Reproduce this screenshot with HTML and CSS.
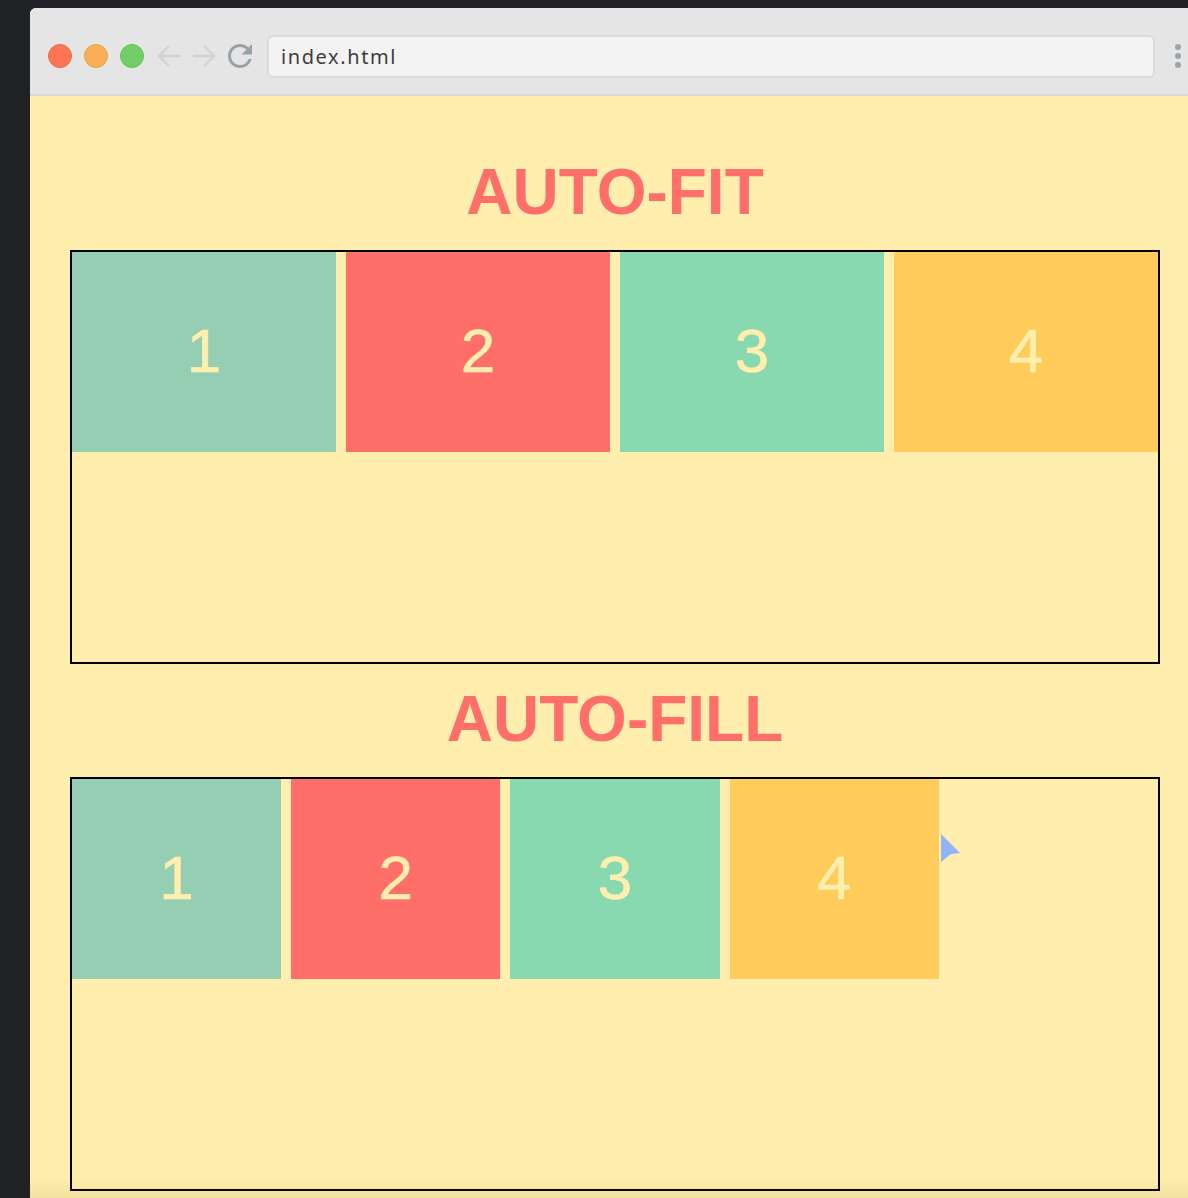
FILE: index.html
```html
<!DOCTYPE html>
<html lang="en">
<head>
<meta charset="utf-8">
<title>index.html</title>
<link rel="stylesheet" href="styles.css">
</head>
<body>
<div class="window">
  <div class="toolbar">
    <div class="lights">
      <span class="light light-red"></span>
      <span class="light light-orange"></span>
      <span class="light light-green"></span>
    </div>
    <svg class="nav nav-back" width="24" height="24" viewBox="0 0 24 24"><path d="M23 12H2M12 2L2 12l10 10" fill="none" stroke="#cfd2d5" stroke-width="2.4"/></svg>
    <svg class="nav nav-fwd" width="24" height="24" viewBox="0 0 24 24"><path d="M1 12h21M12 2l10 10-10 10" fill="none" stroke="#cfd2d5" stroke-width="2.4"/></svg>
    <svg class="reload" width="36" height="36" viewBox="0 0 24 24"><path fill="#97a1a7" d="M17.65 6.35A7.958 7.958 0 0 0 12 4c-4.420 0-7.99 3.58-7.99 8s3.57 8 7.99 8c3.73 0 6.84-2.55 7.73-6h-2.08A5.99 5.99 0 0 1 12 18c-3.31 0-6-2.69-6-6s2.69-6 6-6c1.66 0 3.14.69 4.22 1.78L13 11h7V4l-2.35 2.35z"/></svg>
    <div class="address">index.html</div>
    <div class="menu"><span></span><span></span><span></span></div>
  </div>
  <main class="page">
    <h1 class="title">AUTO-FIT</h1>
    <div class="grid grid-fit">
      <div class="item item-1">1</div>
      <div class="item item-2">2</div>
      <div class="item item-3">3</div>
      <div class="item item-4">4</div>
    </div>
    <h1 class="title">AUTO-FILL</h1>
    <div class="grid grid-fill">
      <div class="item item-1">1</div>
      <div class="item item-2">2</div>
      <div class="item item-3">3</div>
      <div class="item item-4">4</div>
      <svg class="cursor" width="20" height="28" viewBox="0 0 20 28"><polygon points="0,0 19,19 10,20 0,28" fill="#8fb4fb"/></svg>
    </div>
  </main>
</div>
</body>
</html>
```
FILE: styles.css
```css
html, body {
  margin: 0;
  padding: 0;
  overflow: hidden;
}
body {
  background: #202125;
  height: 1198px;
}
.window {
  margin: 8px 0 0 30px;
  width: 1170px;
  height: 1190px;
  background: #ffeead;
  border-top-left-radius: 6px;
  overflow: hidden;
}
.window::after {
  content: "";
  position: fixed;
  left: 30px;
  right: 0;
  bottom: 0;
  height: 20px;
  background: linear-gradient(to bottom, rgba(120, 100, 40, 0), rgba(120, 100, 40, 0.1));
}
.toolbar {
  display: flex;
  align-items: center;
  height: 76px;
  padding: 10px 0 0 18px;
  background: #e5e5e5;
  border-bottom: 2px solid #d8d8d8;
}
.lights {
  display: flex;
  gap: 12px;
}
.light {
  display: block;
  width: 24px;
  height: 24px;
  border-radius: 50%;
  box-sizing: border-box;
}
.light-red { background: #fd7553; border: 1px solid #ea6a4b; }
.light-orange { background: #f8ae56; border: 1px solid #e9a24f; }
.light-green { background: #72cf67; border: 1px solid #67c05d; }
.nav-back { margin-left: 13px; }
.nav-fwd { margin-left: 11px; }
.reload { margin-left: 6px; }
.address {
  margin-left: 9px;
  height: 39px;
  background: #f3f3f3;
  border: 2px solid #dadada;
  border-radius: 6px;
  font-family: "Noto Sans", "Liberation Sans", sans-serif;
  font-size: 20px;
  letter-spacing: 1.6px;
  color: #3d3d3d;
  line-height: 39px;
  padding-left: 12px;
  box-sizing: content-box;
  width: 872px;
}
.menu {
  display: flex;
  flex-direction: column;
  gap: 3px;
  margin-left: 20px;
}
.menu span {
  display: block;
  width: 6px;
  height: 6px;
  border-radius: 50%;
  background: #9aa4ab;
}
.page {
  padding: 41px 40px 0;
}
.title {
  margin: 23px 0 26px;
  font-family: "Liberation Sans", Arial, Helvetica, sans-serif;
  font-weight: 700;
  font-size: 64px;
  line-height: 64px;
  text-align: center;
  color: #ff6f69;
}
.grid {
  position: relative;
  display: grid;
  grid-gap: 10px;
  grid-auto-rows: 200px;
  align-content: start;
  height: 410px;
  border: 2px solid #000;
}
.grid-fit {
  grid-template-columns: repeat(auto-fit, minmax(200px, 1fr));
}
.grid-fill {
  grid-template-columns: repeat(auto-fill, minmax(200px, 1fr));
}
.item {
  display: flex;
  align-items: center;
  justify-content: center;
  padding-bottom: 4px;
  box-sizing: border-box;
  font-family: "Liberation Sans", Arial, Helvetica, sans-serif;
  font-size: 62px;
  -webkit-text-stroke: 0.6px #ffeead;
  color: #ffeead;
}
.item-1 { background: #96ceb4; }
.item-2 { background: #ff6f69; }
.item-3 { background: #88d8b0; }
.item-4 { background: #ffcc5c; }
.cursor {
  position: absolute;
  left: 869px;
  top: 55px;
}
```
